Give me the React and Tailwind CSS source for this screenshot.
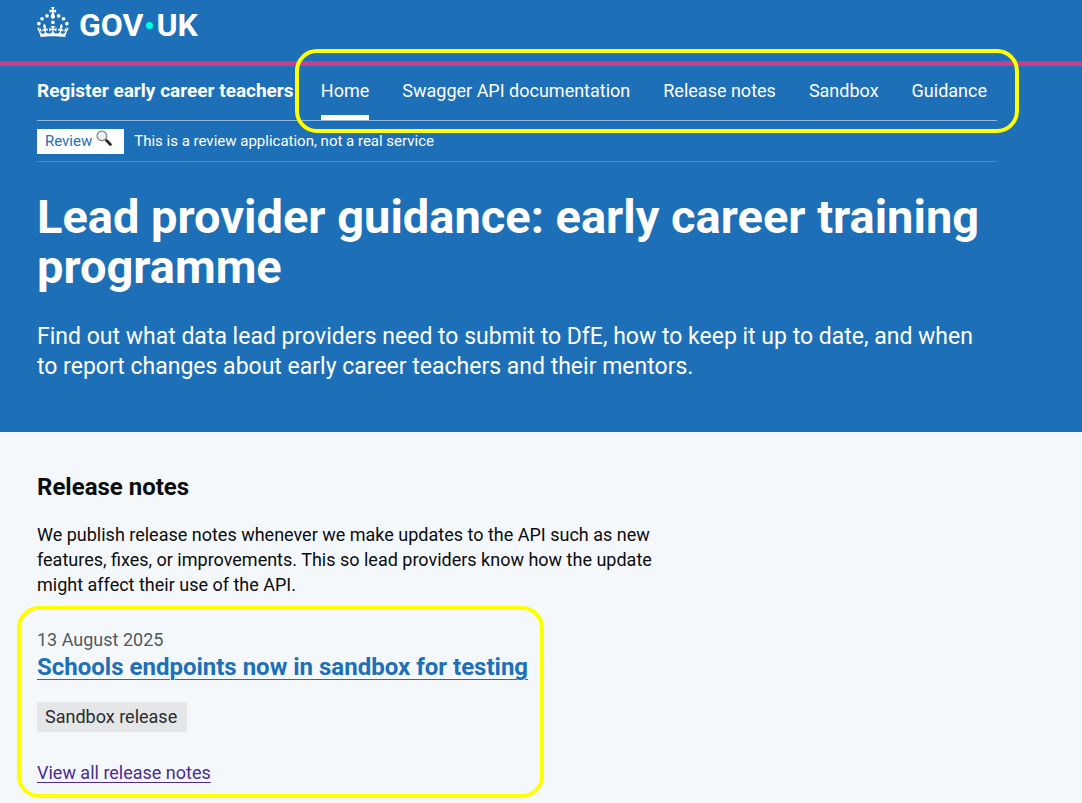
const navItems = [
  { label: 'Home', current: true },
  { label: 'Swagger API documentation' },
  { label: 'Release notes' },
  { label: 'Sandbox' },
  { label: 'Guidance' },
];

function Crown() {
  return (
    <svg viewBox="0 0 64 60" className="h-[30px] w-8" fill="currentColor" aria-hidden="true">
      <circle cx="20" cy="17.6" r="3.7" />
      <circle cx="10.2" cy="23.5" r="3.7" />
      <circle cx="3.7" cy="33.2" r="3.7" />
      <circle cx="31.7" cy="30.6" r="3.7" />
      <circle cx="43.3" cy="17.6" r="3.7" />
      <circle cx="53.2" cy="23.5" r="3.7" />
      <circle cx="59.7" cy="33.2" r="3.7" />
      <path d="M33.1,9.8c.2-.1.3-.3.5-.5l4.6,2.4v-6.8l-4.6,1.5c-.1-.2-.3-.3-.5-.5l1.9-5.9h-6.7l1.9,5.9c-.2.1-.3.3-.5.5l-4.6-1.5v6.8l4.6-2.4c.1.2.3.3.5.5l-2.6,8c-.9,2.8,1.2,5.7,4.1,5.7h0c3,0,5.1-2.9,4.1-5.7l-2.6-8ZM37,37.9s-3.4,3.8-4.1,6.1c2.2,0,4.2-.5,6.4-2.8l-.7,8.5c-2-2.8-4.4-4.1-5.7-3.8.1,3.1.5,6.7,5.8,7.2,3.7.3,6.7-1.5,7-3.8.4-2.6-2-4.3-3.7-1.6-1.4-4.5,2.4-6.1,4.9-3.2-1.9-4.5-1.8-7.7,2.4-10.9,3,4,2.6,7.3-1.2,11.1,2.4-1.3,6.2,0,4,4.6-1.2-2.8-3.7-2.2-4.2.2-.3,1.7.7,3.7,3,4.2,1.9.3,4.7-.9,7-5.9-1.3,0-2.4.7-3.9,1.7l2.4-8c.6,2.3,1.4,3.7,2.2,4.5.6-1.6.5-2.8,0-5.3l5,1.8c-2.6,3.6-5.2,8.7-7.3,17.5-7.4-1.1-15.7-1.7-24.5-1.7h0c-8.8,0-17.1.6-24.5,1.7-2.1-8.9-4.7-13.9-7.3-17.5l5-1.8c-.5,2.5-.6,3.7,0,5.3.8-.8,1.6-2.3,2.2-4.5l2.4,8c-1.5-1-2.6-1.7-3.9-1.7,2.3,5,5.2,6.2,7,5.9,2.3-.4,3.3-2.4,3-4.2-.5-2.4-3-3.1-4.2-.2-2.2-4.6,1.6-6,4-4.6-3.7-3.7-4.2-7.1-1.2-11.1,4.2,3.2,4.3,6.4,2.4,10.9,2.5-2.8,6.3-1.3,4.9,3.2-1.8-2.7-4.1-1-3.7,1.6.3,2.3,3.3,4.1,7,3.8,5.4-.5,5.7-4.2,5.8-7.2-1.3-.2-3.7,1-5.7,3.8l-.7-8.5c2.2,2.3,4.2,2.7,6.4,2.8-.7-2.3-4.1-6.1-4.1-6.1h10.6,0Z" />
    </svg>
  );
}

function Magnifier() {
  return (
    <svg viewBox="0 0 16 16" className="mt-px size-4 self-start" fill="none" aria-hidden="true">
      <path d="M9.2 9.6 L11 11.2" stroke="#8b8f94" strokeWidth="1.6" />
      <path d="M10.6 10.6 L14.4 14.4" stroke="#2a2a2c" strokeWidth="2.8" strokeLinecap="round" />
      <circle cx="5.9" cy="5.9" r="4.8" fill="#e9eff3" stroke="#85898e" strokeWidth="1.3" />
      <path d="M3.2 5.4 A3 3 0 0 1 5.8 3" stroke="#fff" strokeWidth="1.2" strokeLinecap="round" />
    </svg>
  );
}

export default function App() {
  return (
    <div className="min-h-screen bg-[#f4f8fb] font-['Roboto','Liberation_Sans',sans-serif] text-[#0b0c0c]">
      <div className="bg-[#1d70b8] text-white">
        <header className="border-b-[5px] border-[#c83e87] px-[37px] pt-[7px] pb-6">
          <a href="#" aria-label="GOV.UK" className="inline-flex h-[30px] items-end align-top">
            <Crown />
            <span className="ml-2.5 flex items-center gap-[3px] text-[32px] leading-6 font-bold">
              GOV
              <span className="size-[7px] rounded-full bg-[#00ffe0]" />
              UK
            </span>
          </a>
        </header>

        <div className="px-[37px] pb-[50px]">
          <div className="max-w-[960px]">
            <div className="flex h-[55px] justify-between border-b border-[#8eb8dc]">
              <a href="#" className="text-[19px] leading-[50px] font-bold whitespace-nowrap">
                Register early career teachers
              </a>
              <nav aria-label="Main" className="relative flex gap-[33px] pr-2.5">
                {navItems.map((item) => (
                  <a
                    key={item.label}
                    href="#"
                    aria-current={item.current ? 'page' : undefined}
                    className={
                      item.current
                        ? 'border-b-[5px] border-white text-[18px] leading-[50px] whitespace-nowrap'
                        : 'text-[18px] leading-[50px] whitespace-nowrap'
                    }
                  >
                    {item.label}
                  </a>
                ))}
                <div className="pointer-events-none absolute -top-[17px] -right-[22px] -bottom-[13px] -left-[26px] rounded-[22px] border-4 border-[#ffff00]" />
              </nav>
            </div>

            <div className="flex items-center gap-2.5 border-b border-[#4d8fc9] pt-2 pb-[7px] text-[15px] leading-[25px]">
              <strong className="flex h-[25px] items-center gap-1 bg-white pr-3 pl-2 font-normal text-[#1d70b8]">
                Review
                <Magnifier />
              </strong>
              <span>This is a review application, not a real service</span>
            </div>

            <h1 className="mt-[30px] text-[47px] leading-[50px] font-bold">
              Lead provider guidance: early career training programme
            </h1>
            <p className="mt-[30px] text-[23px] leading-[30px]">
              Find out what data lead providers need to submit to DfE, how to keep it up to date, and when to
              report changes about early career teachers and their mentors.
            </p>
          </div>
        </div>
      </div>

      <main className="px-[37px] pt-10 pb-4">
        <h2 className="text-[24px] leading-[30px] font-bold">Release notes</h2>
        <p className="mt-5 max-w-[640px] text-[18px] leading-[25px]">
          We publish release notes whenever we make updates to the API such as new features, fixes, or
          improvements. This so lead providers know how the update might affect their use of the API.
        </p>
        <section className="relative mt-[30px] w-fit">
          <p className="text-[18px] leading-[25px] text-[#505a5f]">13 August 2025</p>
          <h3 className="text-[24px] leading-[30px] font-bold">
            <a href="#" className="text-[#1d70b8] underline decoration-1 underline-offset-4">
              Schools endpoints now in sandbox for testing
            </a>
          </h3>
          <strong className="mt-5 block w-fit bg-[#e5e6e7] pr-2.5 pl-2 text-[18px] leading-[30px] font-normal text-[#282d30]">
            Sandbox release
          </strong>
          <a
            href="#"
            className="mt-7 inline-block align-top text-[18px] leading-[25px] text-[#4c2c92] underline decoration-1 underline-offset-3"
          >
            View all release notes
          </a>
          <div className="pointer-events-none absolute -top-[21px] -right-4 -bottom-[13px] -left-5 rounded-[22px] border-4 border-[#ffff00]" />
        </section>
      </main>
    </div>
  );
}
